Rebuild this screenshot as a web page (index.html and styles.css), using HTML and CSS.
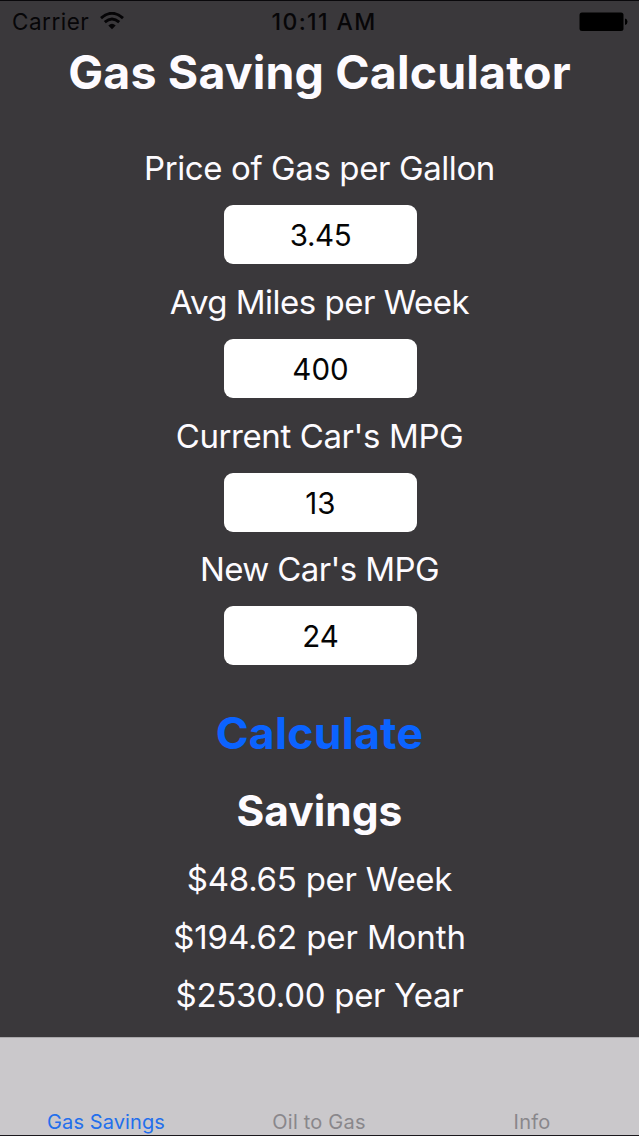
FILE: index.html
```html
<!DOCTYPE html>
<html lang="en">
<head>
<meta charset="utf-8">
<title>Gas Saving Calculator</title>
<link rel="stylesheet" href="styles.css">
</head>
<body>
<div class="screen">
  <header class="status">
    <div class="carrier"><span class="carrier-name">Carrier</span>
      <svg class="wifi" viewBox="0 0 24 18" width="24" height="18"><g fill="none" stroke="#050406" stroke-width="2.9"><path d="M1 6.2Q12-3.6 23 6.2"/><path d="M4.8 10.1Q12 3.7 19.2 10.1"/></g><path d="M12 17.2 8.3 13.4Q12 10.1 15.7 13.4Z" fill="#050406"/></svg>
    </div>
    <time class="clock">10:11 AM</time>
    <svg class="battery" viewBox="0 0 49 20" width="49" height="20"><rect x="0.5" y="0.5" width="44" height="18.5" rx="2.5" fill="#000"/><path d="M46 6.5Q48.5 7 48.5 9.7T46 13Z" fill="#000"/></svg>
  </header>
  <h1 class="title"><span>Gas Saving Calculator</span></h1>
  <form class="fields">
    <label class="field"><span class="label price">Price of Gas per Gallon</span><input class="box decimal" value="3.45"></label>
    <label class="field"><span class="label miles">Avg Miles per Week</span><input class="box" value="400"></label>
    <label class="field"><span class="label current">Current Car's MPG</span><input class="box" value="13"></label>
    <label class="field"><span class="label new">New Car's MPG</span><input class="box" value="24"></label>
  </form>
  <button class="calculate">Calculate</button>
  <section class="savings">
    <h2 class="heading">Savings</h2>
    <p class="result week">$48.65 per Week</p>
    <p class="result month">$194.62 per Month</p>
    <p class="result year">$2530.00 per Year</p>
  </section>
  <nav class="tabs">
    <a class="tab active">Gas Savings</a>
    <a class="tab">Oil to Gas</a>
    <a class="tab">Info</a>
  </nav>
</div>
</body>
</html>
```
FILE: styles.css
```css
* { box-sizing: border-box; }
body { margin: 0; background: #3a383b; font-family: Inter, "Liberation Sans", sans-serif; }
.screen { width: 639px; height: 1136px; display: flex; flex-direction: column; align-items: center; background: #3a383b; color: #fdfbff; border-top: 1px solid #09080b; border-bottom: 1px solid #1b191d; overflow: hidden; }
.status { width: 100%; height: 41px; flex: none; display: grid; grid-template-columns: 1fr auto 1fr; align-items: center; padding: 0 11px 0 12px; color: #070608; font-size: 22.5px; line-height: 40px; }
.carrier { display: flex; align-items: center; gap: 11px; letter-spacing: 0.5px; }
.wifi { margin-top: -2px; }
.clock { font-weight: 500; font-size: 23px; letter-spacing: 1.4px; margin-left: 8px; }
.battery { justify-self: end; }
.title { margin: 0; height: 60px; line-height: 60px; font-size: 46.5px; font-weight: 650; letter-spacing: 0.15px; white-space: nowrap; }
.fields { display: flex; flex-direction: column; align-items: center; gap: 17.8px; margin-top: 46px; }
.field { display: flex; flex-direction: column; align-items: center; gap: 17px; }
.label, .result { height: 40px; line-height: 40px; font-size: 33px; font-weight: 380; letter-spacing: -0.4px; white-space: nowrap; }
.label.miles { letter-spacing: -0.5px; }
.label.new { letter-spacing: -0.6px; }
.box { width: 193px; height: 59px; border: 0; border-radius: 9px; padding: 1px 0 0; margin-left: 2px; background: #fff; color: #050505; text-align: center; font: 400 29.5px/58px Inter, "Liberation Sans", sans-serif; }
.decimal { letter-spacing: -0.4px; }
.calculate { margin-top: 38px; height: 60px; padding: 0; border: 0; background: none; color: #0b63ff; font: 650 44.5px/60px Inter, "Liberation Sans", sans-serif; letter-spacing: 0.3px; }
.savings { display: flex; flex-direction: column; align-items: center; margin-top: 18px; }
.heading { margin: 0 0 18px; height: 60px; line-height: 60px; font-size: 42.5px; font-weight: 650; }
.result { margin: 0 0 18px; letter-spacing: -0.1px; }
.result.week { letter-spacing: -0.25px; }
.result.year { letter-spacing: -0.3px; }
.tabs { width: 100%; height: 98px; flex: none; margin-top: auto; display: grid; grid-template-columns: repeat(3, 1fr); align-items: end; background: #cac8cb; border-top: 1px solid #aaa8ab; }
.tab { text-align: center; font-size: 20px; line-height: 26px; letter-spacing: 0.2px; color: #89878b; margin-left: -1px; }
.tab.active { color: #236fec; letter-spacing: 0.1px; }
```
